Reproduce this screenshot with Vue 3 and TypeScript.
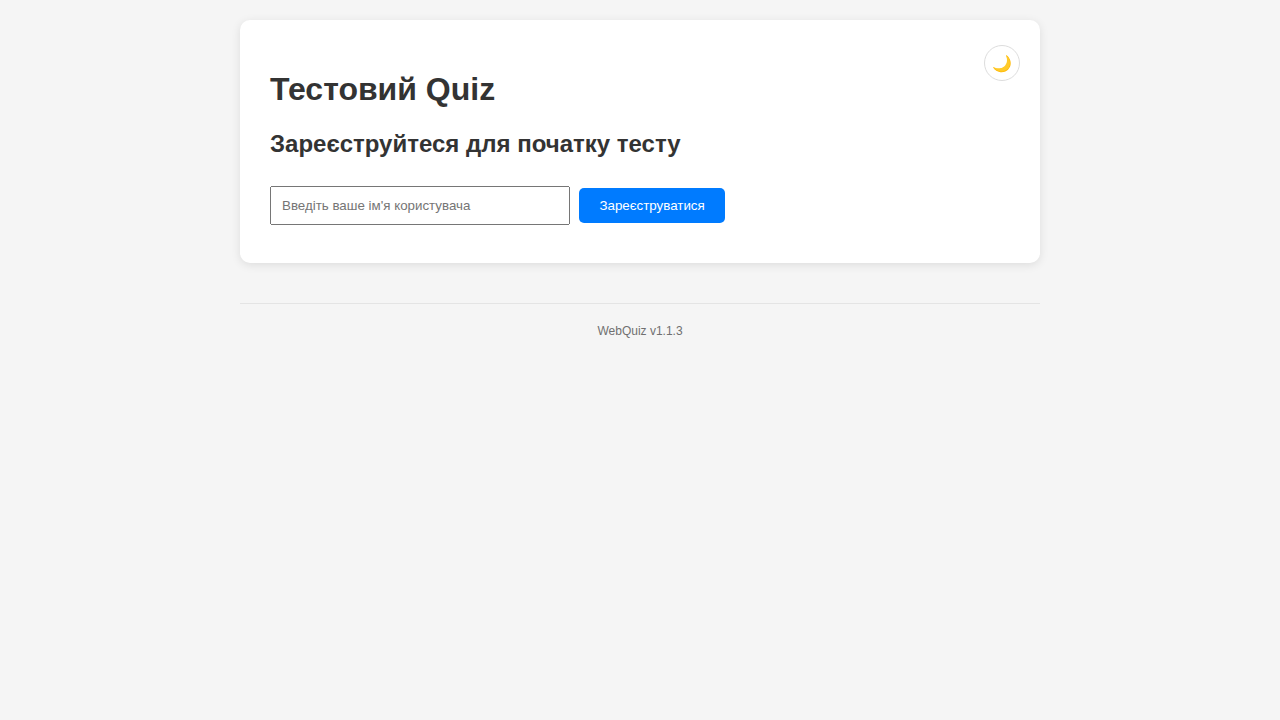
<script setup lang="ts">
import { ref } from 'vue'

const username = ref<string>('')
const version: string = '1.1.3'
</script>

<template>
  <div class="page">
    <main class="container">
      <button class="theme-toggle" type="button">🌙</button>
      <h1>Тестовий Quiz</h1>
      <section>
        <h2>Зареєструйтеся для початку тесту</h2>
        <div class="form">
          <input v-model="username" type="text" placeholder="Введіть ваше ім'я користувача">
          <button class="submit" type="button">Зареєструватися</button>
        </div>
      </section>
    </main>
    <footer>WebQuiz v{{ version }}</footer>
  </div>
</template>

<style>
body {
  background: #f5f5f5;
}
</style>

<style scoped>
.page {
  max-width: 800px;
  margin: 0 auto;
  padding: 20px;
  font-family: Arial, "Liberation Sans", sans-serif;
  color: #333;
}
.container {
  position: relative;
  height: 243px;
  padding: 30px;
  box-sizing: border-box;
  background: #fff;
  border-radius: 10px;
  box-shadow: 0 2px 10px rgba(0, 0, 0, 0.1);
}
.theme-toggle {
  position: absolute;
  top: 25px;
  right: 20px;
  width: 36px;
  height: 36px;
  display: flex;
  align-items: center;
  justify-content: center;
  padding: 0;
  border: 1px solid #ddd;
  border-radius: 50%;
  background: #fff;
  font-size: 16px;
  font-family: inherit;
}
h1 {
  margin: 21px 0;
  font-size: 32px;
  line-height: 37px;
}
h2 {
  margin: 22px 0 20px;
  font-size: 24px;
  line-height: 28px;
}
.form {
  display: flex;
  align-items: center;
  gap: 9.45px;
  padding-top: 8px;
}
input {
  box-sizing: border-box;
  width: 300px;
  height: 39px;
  padding: 10px;
  font-family: inherit;
  font-size: 13.333px;
}
.submit {
  height: 35px;
  padding: 10px 20px;
  border: none;
  border-radius: 5px;
  background: #007bff;
  color: #fff;
  font-family: inherit;
  font-size: 13.333px;
}
footer {
  margin-top: 40px;
  padding: 20px 0;
  border-top: 1px solid #e4e4e4;
  text-align: center;
  font-size: 12px;
  color: #707070;
}
</style>
